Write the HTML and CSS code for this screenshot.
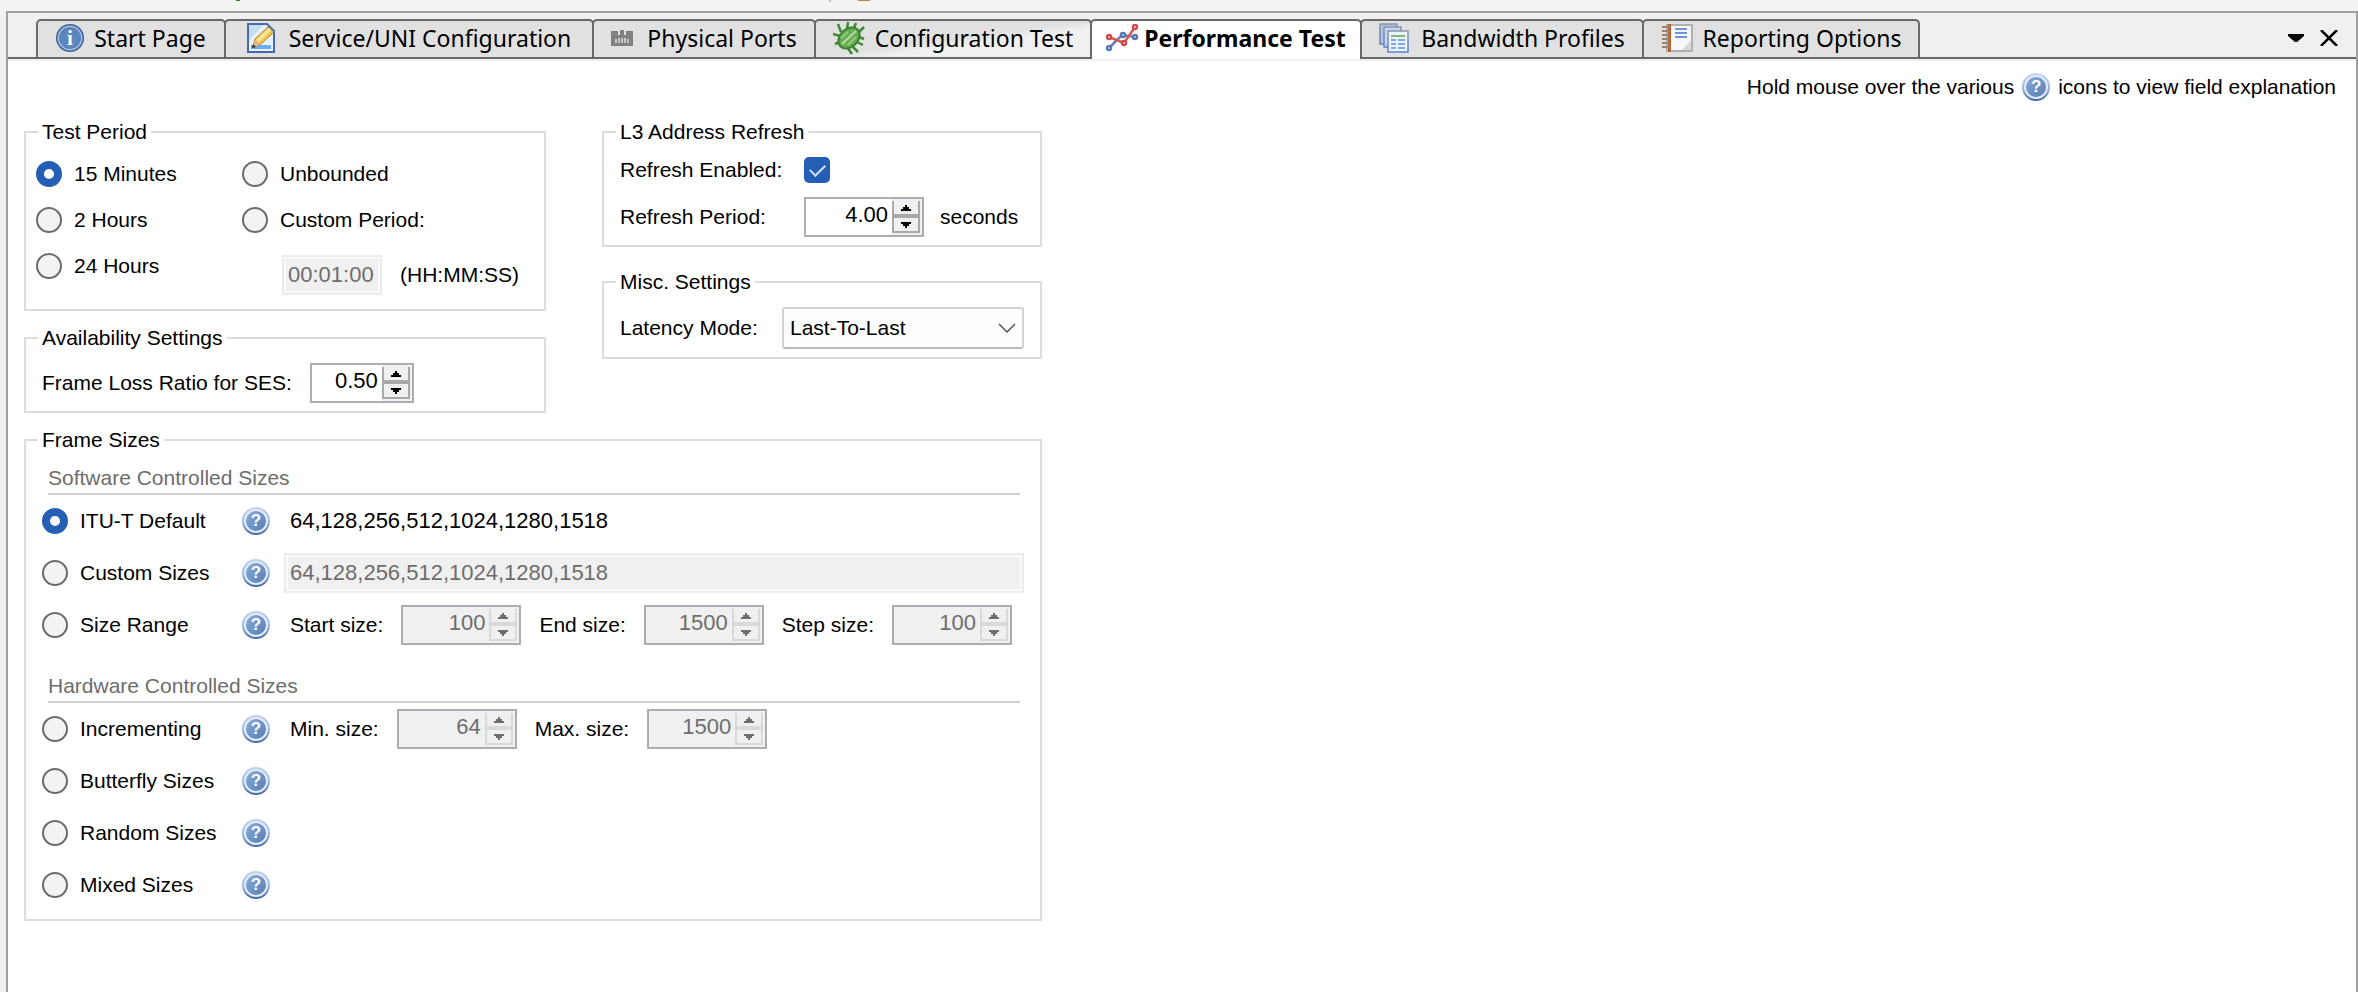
FILE: index.html
```html
<!DOCTYPE html>
<html lang="en">
<head>
    <meta charset="UTF-8">
    <meta name="viewport" content="width=device-width, initial-scale=1.0">
    <title>Performance Test</title>
    <link rel="stylesheet" href="styles.css">
</head>
<body>
    <svg class="symbols" width="0" height="0" aria-hidden="true">
        <symbol id="up" viewBox="0 0 12 6"><path d="M5 0h2v2h2v2h2v2H1V4h2V2h2z"/></symbol>
        <symbol id="down" viewBox="0 0 12 6"><path d="M1 0h10v2H9v2H7v2H5V4H3V2H1z"/></symbol>
    </svg>

    <div class="toolbar">
        <svg width="900" height="2" aria-hidden="true">
            <rect x="236" width="4" height="1" fill="#3c7d22"/>
            <rect x="829" width="2" height="2" fill="#bdbdbd"/>
            <rect x="858" width="12" height="1" fill="#b98a4c"/>
        </svg>
    </div>

    <main class="window">
        <header class="tabbar">
            <div class="tabs" role="tablist">
                <button class="tab tab-start" role="tab">
                    <svg width="28" height="28" viewBox="0 0 28 28">
                        <circle cx="14" cy="14" r="14" fill="#3f5f97"/>
                        <circle cx="14" cy="14" r="12.5" fill="#a9c0e2"/>
                        <circle cx="14" cy="14" r="11" fill="#5c84bd"/>
                        <text x="14" y="21" class="glyph-info">i</text>
                    </svg>
                    <span>Start Page</span>
                </button>
                <button class="tab tab-service" role="tab">
                    <svg width="28" height="30" viewBox="0 0 28 30">
                        <path d="M1 1h19l7 7v21H1z" fill="#e8f1fd" stroke="#4468b2" stroke-width="2"/>
                        <path d="M2 2h14L2 18z" fill="#c8dcf4"/>
                        <path d="M4 22h20v4H4z" fill="#6ab0f0"/>
                        <path d="M6 24l2-8L21 4l6 5L14 21z" fill="#f2c64f" stroke="#a97e2c"/>
                        <path d="M9 17L22 5l2 2-12 12z" fill="#fbe79b"/>
                        <path d="M6 24l2-7 5 5z" fill="#e8b48a"/>
                        <path d="M5 25l1-4 3 3z" fill="#3a2a18"/>
                    </svg>
                    <span>Service/UNI Configuration</span>
                </button>
                <button class="tab tab-ports" role="tab">
                    <svg width="22" height="16" viewBox="0 0 22 16">
                        <path d="M0 1h7v4h2V0h4v5h2V1h7v15H0z" fill="#808080"/>
                        <path d="M5 9v4M8 8v5M11 8v5M14 8v5M17 9v4" stroke="#e1e1e1" stroke-width="1.5"/>
                    </svg>
                    <span>Physical Ports</span>
                </button>
                <button class="tab tab-config" role="tab">
                    <svg width="32" height="34" viewBox="0 0 32 32">
                        <g stroke="#3f8a34" stroke-width="2.5" fill="none">
                            <path d="M8 10L5 2M14 8L15 0M20 8L23 1M26 10L31 5M26 15l5 2M24 20l6 3M20 25l5 5M14 25l5 7M7 20l-5 2M7 14l-7-2"/>
                        </g>
                        <ellipse cx="16" cy="16" rx="12" ry="9" transform="rotate(-45 16 16)" fill="#68ad55" stroke="#3c8032" stroke-width="2"/>
                        <path d="M9 22L23 9" stroke="#b6dd9c" stroke-width="2"/>
                        <path d="M8 16l7-6M15 23l8-8" stroke="#97c97e" stroke-width="2"/>
                    </svg>
                    <span>Configuration Test</span>
                </button>
                <button class="tab tab-performance tab-active" role="tab" aria-selected="true">
                    <svg width="32" height="28" viewBox="0 0 32 28">
                        <path d="M3 24L16 11l13 2" fill="none" stroke="#6380b6" stroke-width="2.5"/>
                        <path d="M3 13l15 6L29 3" fill="none" stroke="#d95757" stroke-width="2.5"/>
                        <g fill="#9db3da" stroke="#5776b0" stroke-width="2">
                            <circle cx="3" cy="24" r="2.2"/><circle cx="17" cy="11" r="2.2"/><circle cx="29" cy="13" r="2.2"/>
                        </g>
                        <g fill="#efa3a3" stroke="#d14747" stroke-width="2">
                            <circle cx="3" cy="13" r="2.2"/><circle cx="18" cy="19" r="2.2"/><circle cx="29" cy="3" r="2.2"/>
                        </g>
                    </svg>
                    <span>Performance Test</span>
                </button>
                <button class="tab tab-bandwidth" role="tab">
                    <svg width="30" height="32" viewBox="0 0 30 30">
                        <defs>
                            <linearGradient id="sheet" x1="0" y1="0" x2="0" y2="1">
                                <stop offset="0" stop-color="#8796b0"/>
                                <stop offset="1" stop-color="#5b80cc"/>
                            </linearGradient>
                        </defs>
                        <g stroke="url(#sheet)" stroke-width="1.5">
                            <path d="M1 1h17v20H1z" fill="#b5c4dd"/>
                            <path d="M5 4h17v20H5z" fill="#c9d7ec"/>
                            <path d="M9 8h20v21H9z" fill="#eaf2fd"/>
                        </g>
                        <path d="M12 13h14" stroke="#84b574" stroke-width="2"/>
                        <path d="M12 17h5M19 17h7M12 21h5M19 21h7M12 25h5M19 25h7" stroke="#86a8e0" stroke-width="2"/>
                    </svg>
                    <span>Bandwidth Profiles</span>
                </button>
                <button class="tab tab-reporting" role="tab">
                    <svg width="32" height="28" viewBox="0 0 32 28">
                        <path d="M6 1h25v26H6z" fill="#f7f7f7" stroke="#b0b0b0" stroke-width="2"/>
                        <path d="M7 0h3v28H7z" fill="#b5602f"/>
                        <path d="M1 3h8M1 7h8M1 11h8M1 15h8M1 19h8M1 23h8" stroke="#9b8377" stroke-width="2"/>
                        <path d="M14 5h12M14 9h12M14 13h12" stroke="#6f93d8" stroke-width="2"/>
                        <path d="M21 26l9-10v10z" fill="#d9d9d9"/>
                    </svg>
                    <span>Reporting Options</span>
                </button>
            </div>
            <div class="tab-actions">
                <button class="icon-button" aria-label="Show tab list">
                    <svg width="16" height="8" viewBox="0 0 16 8"><path d="M0 0h16v2L9 8H7L0 2z"/></svg>
                </button>
                <button class="icon-button" aria-label="Close tab">
                    <svg width="18" height="16" viewBox="0 0 18 16"><path d="M1 0l16 16M17 0L1 16" stroke="#000" stroke-width="2.5"/></svg>
                </button>
            </div>
        </header>

        <section class="panel">
            <p class="hint">
                Hold mouse over the various
                <span class="help">?</span>
                icons to view field explanation
            </p>

            <form class="settings">
                <div class="column column-left">
                    <fieldset class="group group-period">
                        <legend>Test Period</legend>
                        <div class="period">
                            <div class="options">
                                <label class="option"><input type="radio" name="period" checked> 15 Minutes</label>
                                <label class="option"><input type="radio" name="period"> 2 Hours</label>
                                <label class="option"><input type="radio" name="period"> 24 Hours</label>
                            </div>
                            <div class="options">
                                <label class="option"><input type="radio" name="period"> Unbounded</label>
                                <label class="option"><input type="radio" name="period"> Custom Period:</label>
                                <div class="time">
                                    <input class="text time-input" id="custom-period" type="text" value="00:01:00" disabled>
                                    <label for="custom-period">(HH:MM:SS)</label>
                                </div>
                            </div>
                        </div>
                    </fieldset>

                    <fieldset class="group">
                        <legend>Availability Settings</legend>
                        <div class="field">
                            <label for="loss-ratio">Frame Loss Ratio for SES:</label>
                            <div class="spinner spinner-small">
                                <input id="loss-ratio" type="text" value="0.50">
                                <div class="spin-buttons">
                                    <button type="button" aria-label="Increase"><svg><use href="#up"/></svg></button>
                                    <button type="button" aria-label="Decrease"><svg><use href="#down"/></svg></button>
                                </div>
                            </div>
                        </div>
                    </fieldset>
                </div>

                <div class="column column-right">
                    <fieldset class="group">
                        <legend>L3 Address Refresh</legend>
                        <div class="refresh">
                            <label for="refresh-enabled">Refresh Enabled:</label>
                            <input id="refresh-enabled" type="checkbox" checked>
                            <label for="refresh-period">Refresh Period:</label>
                            <div class="field-unit">
                                <div class="spinner">
                                    <input id="refresh-period" type="text" value="4.00">
                                    <div class="spin-buttons">
                                        <button type="button" aria-label="Increase"><svg><use href="#up"/></svg></button>
                                        <button type="button" aria-label="Decrease"><svg><use href="#down"/></svg></button>
                                    </div>
                                </div>
                                <span>seconds</span>
                            </div>
                        </div>
                    </fieldset>

                    <fieldset class="group">
                        <legend>Misc. Settings</legend>
                        <div class="field field-spread">
                            <label for="latency">Latency Mode:</label>
                            <div class="select">
                                <select id="latency">
                                    <option>Last-To-Last</option>
                                </select>
                                <svg class="chevron" width="18" height="10" viewBox="0 0 18 10"><path d="M1 1l8 8 8-8" fill="none" stroke="#555" stroke-width="1.5"/></svg>
                            </div>
                        </div>
                    </fieldset>
                </div>

                <fieldset class="group group-sizes">
                    <legend>Frame Sizes</legend>

                    <h2>Software Controlled Sizes</h2>
                    <div class="size-row">
                        <label class="option"><input type="radio" name="sizes" checked> ITU-T Default</label>
                        <span class="help">?</span>
                        <span class="inset default-sizes">64,128,256,512,1024,1280,1518</span>
                    </div>
                    <div class="size-row">
                        <label class="option"><input type="radio" name="sizes"> Custom Sizes</label>
                        <span class="help">?</span>
                        <input class="text" type="text" aria-label="Custom sizes" value="64,128,256,512,1024,1280,1518" disabled>
                    </div>
                    <div class="size-row">
                        <label class="option"><input type="radio" name="sizes"> Size Range</label>
                        <span class="help">?</span>
                        <div class="ranges inset">
                            <div class="field">
                                <label for="start-size">Start size:</label>
                                <div class="spinner">
                                    <input id="start-size" type="text" value="100" disabled>
                                    <div class="spin-buttons">
                                        <button type="button" aria-label="Increase" disabled><svg><use href="#up"/></svg></button>
                                        <button type="button" aria-label="Decrease" disabled><svg><use href="#down"/></svg></button>
                                    </div>
                                </div>
                            </div>
                            <div class="field">
                                <label for="end-size">End size:</label>
                                <div class="spinner">
                                    <input id="end-size" type="text" value="1500" disabled>
                                    <div class="spin-buttons">
                                        <button type="button" aria-label="Increase" disabled><svg><use href="#up"/></svg></button>
                                        <button type="button" aria-label="Decrease" disabled><svg><use href="#down"/></svg></button>
                                    </div>
                                </div>
                            </div>
                            <div class="field">
                                <label for="step-size">Step size:</label>
                                <div class="spinner">
                                    <input id="step-size" type="text" value="100" disabled>
                                    <div class="spin-buttons">
                                        <button type="button" aria-label="Increase" disabled><svg><use href="#up"/></svg></button>
                                        <button type="button" aria-label="Decrease" disabled><svg><use href="#down"/></svg></button>
                                    </div>
                                </div>
                            </div>
                        </div>
                    </div>

                    <h2>Hardware Controlled Sizes</h2>
                    <div class="size-row">
                        <label class="option"><input type="radio" name="sizes"> Incrementing</label>
                        <span class="help">?</span>
                        <div class="ranges inset">
                            <div class="field">
                                <label for="min-size">Min. size:</label>
                                <div class="spinner">
                                    <input id="min-size" type="text" value="64" disabled>
                                    <div class="spin-buttons">
                                        <button type="button" aria-label="Increase" disabled><svg><use href="#up"/></svg></button>
                                        <button type="button" aria-label="Decrease" disabled><svg><use href="#down"/></svg></button>
                                    </div>
                                </div>
                            </div>
                            <div class="field">
                                <label for="max-size">Max. size:</label>
                                <div class="spinner">
                                    <input id="max-size" type="text" value="1500" disabled>
                                    <div class="spin-buttons">
                                        <button type="button" aria-label="Increase" disabled><svg><use href="#up"/></svg></button>
                                        <button type="button" aria-label="Decrease" disabled><svg><use href="#down"/></svg></button>
                                    </div>
                                </div>
                            </div>
                        </div>
                    </div>
                    <div class="size-row">
                        <label class="option"><input type="radio" name="sizes"> Butterfly Sizes</label>
                        <span class="help">?</span>
                    </div>
                    <div class="size-row">
                        <label class="option"><input type="radio" name="sizes"> Random Sizes</label>
                        <span class="help">?</span>
                    </div>
                    <div class="size-row">
                        <label class="option"><input type="radio" name="sizes"> Mixed Sizes</label>
                        <span class="help">?</span>
                    </div>
                </fieldset>
            </form>
        </section>
    </main>
</body>
</html>
```

FILE: styles.css
```css
* {
    box-sizing: border-box;
}
body {
    margin: 0;
    min-height: 100vh;
    display: flex;
    flex-direction: column;
    background-color: #f0f0f0;
    color: #000;
    font-family: "Liberation Sans", Arial, sans-serif;
    font-size: 21px;
    line-height: 26px;
}
input, select, button {
    font: inherit;
    color: inherit;
    margin: 0;
}
label {
    white-space: nowrap;
}
.symbols {
    position: absolute;
}
.glyph-info {
    fill: #fff;
    text-anchor: middle;
    font-family: "Liberation Serif", serif;
    font-size: 21px;
    font-weight: 700;
}
.toolbar {
    height: 11px;
    background-color: #f3f3f3;
    overflow: hidden;
}
.toolbar svg {
    display: block;
}
.window {
    flex: 1;
    display: flex;
    flex-direction: column;
    margin-left: 6px;
    border: 2px solid #a0a0a0;
    border-bottom: 0;
}

/* tabs */
.tabbar {
    display: flex;
    justify-content: space-between;
    padding: 6px 18px 0 28px;
    border-bottom: 2px solid #696969;
}
.tabs {
    display: flex;
}
.tab {
    display: flex;
    align-items: center;
    justify-content: center;
    gap: 10px;
    height: 38px;
    margin-right: -2px;
    padding: 0 0 2px;
    border: 2px solid #696969;
    border-bottom: 0;
    border-radius: 5px 5px 0 0;
    background-color: #e1e1e1;
    font-family: "Noto Sans", "Open Sans", sans-serif;
    font-size: 23px;
    white-space: nowrap;
}
.tab-start { width: 190px; }
.tab-service { width: 370px; gap: 14px; }
.tab-ports { width: 224px; gap: 14px; }
.tab-config {
    width: 278px;
    background-image: linear-gradient(to bottom right, #e1e1e1 50%, #f0f0f0 60%);
}
.tab-performance { width: 272px; gap: 6px; }
.tab-bandwidth { width: 284px; gap: 12px; }
.tab-reporting { width: 278px; }
.tab-active {
    height: 40px;
    margin-bottom: -2px;
    padding-bottom: 4px;
    background-color: #fff;
    font-weight: 700;
}
.tab-actions {
    display: flex;
    align-items: center;
    gap: 16px;
}
.icon-button {
    display: flex;
    padding: 0;
    border: 0;
    background: none;
}

/* content */
.panel {
    flex: 1;
    padding: 12px 20px 20px 16px;
    border-top: 2px solid #f0f0f0;
    background-color: #fff;
}
.hint {
    display: flex;
    align-items: center;
    justify-content: flex-end;
    gap: 8px;
    margin: 0 0 18px;
}
.help {
    display: grid;
    place-items: center;
    width: 28px;
    height: 28px;
    padding: 2px;
    border: 2px solid transparent;
    border-radius: 50%;
    background:
        linear-gradient(135deg, #86aadb, #587fb2) content-box,
        linear-gradient(#e3ebf6, #e3ebf6) padding-box,
        linear-gradient(#c3d6f0, #9db8de 55%, #3f67a8) border-box;
    color: #fff;
    font-size: 17px;
    font-weight: 700;
    line-height: 20px;
}
.settings {
    display: grid;
    grid-template-columns: minmax(0, 522px) minmax(0, 440px);
    column-gap: 56px;
    row-gap: 14px;
}
.column {
    display: flex;
    flex-direction: column;
    gap: 14px;
}
.column-right {
    gap: 22px;
}
.group {
    min-width: 0;
    margin: 0;
    padding: 12px 16px 8px;
    border: 2px solid #dcdcdc;
}
.group legend {
    margin-left: -4px;
    padding: 0 4px;
}
.group-period {
    padding: 16px 10px 14px;
}
.group-period legend {
    margin-left: 2px;
}
.group-sizes {
    grid-column: 1 / -1;
}
.group-sizes h2 {
    margin: 0 4px 0 6px;
    padding-bottom: 2px;
    border-bottom: 2px solid #d0d0d0;
    color: #6d6d6d;
    font-size: 21px;
    font-weight: 400;
}
.size-row + h2 {
    margin-top: 22px;
}

.period {
    display: grid;
    grid-template-columns: 206px 1fr;
}
.options {
    display: flex;
    flex-direction: column;
    gap: 20px;
}
.option {
    display: flex;
    align-items: center;
    gap: 12px;
}
.time {
    display: flex;
    align-items: center;
    gap: 18px;
    padding: 2px 0 0 40px;
}
.field {
    display: flex;
    align-items: center;
    gap: 18px;
}
.field-spread {
    justify-content: space-between;
}
.field-unit {
    display: flex;
    align-items: center;
    gap: 16px;
}
.refresh {
    display: grid;
    grid-template-columns: 184px 1fr;
    align-items: center;
    row-gap: 14px;
}
.size-row {
    display: grid;
    grid-template-columns: 200px 42px 1fr;
    align-items: center;
    height: 52px;
}
.inset {
    padding-left: 6px;
}
.default-sizes {
    font-size: 22px;
}
.ranges {
    display: flex;
    gap: 18px;
}

/* controls */
input[type="text"] {
    font-size: 22px;
}
input[type="radio"] {
    appearance: none;
    width: 26px;
    height: 26px;
    border: 2px solid #6b6b6b;
    border-radius: 50%;
    background-color: #f3f3f3;
}
input[type="radio"]:checked {
    border: 8px solid #255fb5;
    background-color: #fff;
}
input[type="checkbox"] {
    appearance: none;
    width: 26px;
    height: 26px;
    display: grid;
    place-items: center;
    border-radius: 5px;
    background-color: #255fb5;
}
input[type="checkbox"]:checked::before {
    content: "";
    width: 13px;
    height: 7px;
    margin-top: -3px;
    border: solid #d5e2f5;
    border-width: 0 0 2px 2px;
    transform: rotate(-45deg);
}
.text {
    width: 100%;
    height: 40px;
    padding: 0 4px;
    border: 2px solid #ebebeb;
    background-color: #f0f0f0;
    box-shadow: inset 0 0 0 2px #fafafa;
}
.text:disabled {
    color: #6d6d6d;
}
.time-input {
    width: 100px;
}
.spinner {
    display: flex;
    width: 120px;
    height: 40px;
    border: 2px solid #abadb3;
    background-color: #fff;
}
.spinner-small {
    width: 104px;
}
.spinner input {
    flex: 1;
    min-width: 0;
    height: 34px;
    padding: 0 4px 2px 0;
    border: 0;
    background: none;
    text-align: right;
}
.spin-buttons {
    display: flex;
    flex-direction: column;
    width: 30px;
    padding: 2px 2px 2px 0;
    background-color: #f0f0f0;
}
.spin-buttons button {
    flex: 1;
    display: flex;
    align-items: center;
    justify-content: center;
    padding: 0;
    border: 2px solid #a9a9a9;
    border-top: 0;
    background-color: #f0f0f0;
}
.spin-buttons button + button {
    border-top: 2px solid #a9a9a9;
}
.spin-buttons svg {
    width: 12px;
    height: 6px;
}
.spinner:has(input:disabled) {
    background-color: #f0f0f0;
    color: #6d6d6d;
}
.spin-buttons button:disabled {
    border-color: #d9d9d9;
    fill: #6d6d6d;
}
.select {
    display: grid;
    align-items: center;
    width: 242px;
}
.select select, .chevron {
    grid-area: 1 / 1;
}
.select select {
    appearance: none;
    width: 100%;
    height: 42px;
    padding: 0 40px 0 6px;
    border: 2px solid #d2d2d2;
    border-bottom-color: #bcbcbc;
    border-radius: 3px;
    background-color: #fdfdfd;
}
.chevron {
    justify-self: end;
    margin-right: 8px;
    pointer-events: none;
}
```
